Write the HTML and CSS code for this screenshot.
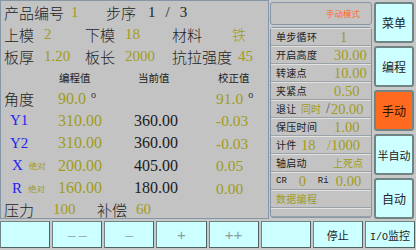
FILE: index.html
```html
<!DOCTYPE html>
<html lang="zh-CN">
<head>
  <meta charset="UTF-8" />
  <title>折弯机 手动</title>
  <link rel="stylesheet" href="styles.css">
</head>
<body>
  <div class="screen">
    <div class="upper">

      <section class="main">
        <div class="info r1">
          <span class="lbl">产品编号</span>
          <span class="val">1</span>
          <span class="lbl">步序</span>
          <span class="step"><span>1</span><span>/</span><span>3</span></span>
        </div>
        <div class="info r2">
          <span class="lbl">上模</span><span class="val">2</span>
          <span class="lbl">下模</span><span class="val">18</span>
          <span class="lbl">材料</span><span class="val cjk">铁</span>
        </div>
        <div class="info r2">
          <span class="lbl">板厚</span><span class="val">1.20</span>
          <span class="lbl">板长</span><span class="val">2000</span>
          <span class="lbl">抗拉强度</span><span class="val shift">45</span>
        </div>

        <div class="heads">
          <span></span><span class="h1">编程值</span><span class="h2">当前值</span><span class="h3">校正值</span>
        </div>

        <div class="axis">
          <span class="lbl">角度</span>
          <span class="num olive">90.0<sup>o</sup></span>
          <span></span>
          <span class="num olive fix">91.0<sup>o</sup></span>
        </div>
        <div class="axis">
          <span class="name">Y1</span>
          <span class="num olive">310.00</span>
          <span class="num">360.00</span>
          <span class="num olive fix">-0.03</span>
        </div>
        <div class="axis">
          <span class="name">Y2</span>
          <span class="num olive">310.00</span>
          <span class="num">360.00</span>
          <span class="num olive fix">-0.03</span>
        </div>
        <div class="axis">
          <span class="name single">X<small>绝对</small></span>
          <span class="num olive">200.00</span>
          <span class="num">405.00</span>
          <span class="num olive fix">0.05</span>
        </div>
        <div class="axis">
          <span class="name single">R<small>绝对</small></span>
          <span class="num olive">160.00</span>
          <span class="num">180.00</span>
          <span class="num olive fix">0.00</span>
        </div>
        <div class="press">
          <span class="lbl">压力</span><span class="val">100</span>
          <span class="lbl">补偿</span><span class="val">60</span>
        </div>
      </section>

      <section class="side">
        <div class="mode">手动模式</div>
        <ul class="params">
          <li><span class="plbl">单步循环</span><span class="pval one">1</span></li>
          <li><span class="plbl">开启高度</span><span class="pval">30.00</span></li>
          <li><span class="plbl">转速点</span><span class="pval">10.00</span></li>
          <li><span class="plbl">夹紧点</span><span class="pval">0.50</span></li>
          <li><span class="plbl">退让</span><span class="tiny">同时</span><span class="slash">/</span><span class="pval">20.00</span></li>
          <li><span class="plbl">保压时间</span><span class="pval">1.00</span></li>
          <li><span class="plbl">计件</span><span class="pval count">18</span><span class="pval">/1000</span></li>
          <li><span class="plbl">轴启动</span><span class="tiny dead">上死点</span></li>
          <li><span class="code">CR</span><span class="pval zero">0</span><span class="code ri">Ri</span><span class="pval">0.00</span></li>
          <li><span class="plbl prog">数据编程</span></li>
          <li class="blank"></li>
        </ul>
      </section>

      <nav class="menu">
        <button class="key">菜单</button>
        <button class="key">编程</button>
        <button class="key active">手动</button>
        <button class="key small">半自动</button>
        <button class="key">自动</button>
      </nav>
    </div>

    <div class="bar">
      <button class="fkey"></button>
      <button class="fkey dim">— —</button>
      <button class="fkey dim">—</button>
      <button class="fkey dim plus">+</button>
      <button class="fkey dim plus">++</button>
      <button class="fkey"></button>
      <button class="fkey">停止</button>
      <button class="fkey"><span class="io">I/O</span>监控</button>
    </div>
  </div>
</body>
</html>
```

FILE: styles.css
```css
body {
  margin: 0;
  background: #c8c8c8;
  font-family: "Liberation Serif", "Noto Sans CJK SC", serif;
  color: #1c1c1c;
}

.screen {
  width: 416px;
  height: 250px;
  overflow: hidden;
}

.upper {
  display: flex;
  height: 220px;
}

/* left work area */
.main {
  width: 269px;
  height: 219px;
  box-sizing: border-box;
  border: 1px solid #8596a6;
  background: #c3c3c3;
}

.lbl {
  font-family: "Noto Sans CJK SC", sans-serif;
  font-size: 15px;
  font-weight: 300;
  color: #222;
}

.val {
  font-size: 15px;
  color: #a09c1c;
}
.val.cjk {
  font-family: "Noto Sans CJK SC", sans-serif;
  font-size: 14px;
  font-weight: 300;
}
.val.shift {
  margin-left: 6px;
}

.olive {
  color: #a09c1c;
}

.info {
  display: grid;
  align-items: center;
  height: 22px;
  padding-left: 3px;
  line-height: 1;
}
.info.r1 {
  grid-template-columns: 67px 35px 42px 1fr;
}
.info.r2 {
  grid-template-columns: 40px 41px 40px 47px 60px 1fr;
}

.step {
  display: flex;
  font-size: 15px;
  color: #222;
}
.step span + span {
  margin-left: 10px;
}

.heads {
  display: grid;
  grid-template-columns: 57px 76px 82px 1fr;
  align-items: center;
  height: 20px;
  font-family: "Noto Sans CJK SC", sans-serif;
  font-size: 10.5px;
  color: #222;
}
.heads .h1 { padding-left: 1px; }
.heads .h2 { padding-left: 4px; }
.heads .h3 { padding-left: 2px; }

.axis {
  display: grid;
  grid-template-columns: 57px 76px 82px 1fr;
  align-items: center;
  height: 22.5px;
  line-height: 1;
}
.axis .lbl {
  padding-left: 3px;
}

.name {
  padding-left: 9px;
  font-size: 15px;
  color: #2424f0;
}
.name.single {
  padding-left: 11px;
}
.name small {
  margin-left: 6px;
  font-family: "Noto Sans CJK SC", sans-serif;
  font-size: 8.5px;
  color: #a09c1c;
  vertical-align: 1px;
}

.num {
  font-size: 16px;
}
.num.fix {
  font-size: 15.5px;
}

.num sup {
  margin-left: 5px;
  font-size: 10px;
  vertical-align: 6px;
  color: #333;
}

.press {
  display: grid;
  grid-template-columns: 49px 44px 39px 1fr;
  align-items: center;
  height: 19px;
  padding-left: 3px;
  line-height: 1;
}

/* parameter column */
.side {
  width: 102px;
  margin-left: 1px;
}

.mode {
  height: 23px;
  margin-top: 2px;
  box-sizing: border-box;
  border: 1px solid #8596a6;
  border-radius: 3px;
  background: #c3c3c3;
  font-family: "Noto Sans CJK SC", sans-serif;
  font-size: 8.5px;
  color: #ff6a22;
  text-align: right;
  padding-right: 11px;
  line-height: 21px;
}

.params {
  list-style: none;
  margin: 2px 0 0;
  padding: 0;
  height: 191px;
  box-sizing: border-box;
  border: 1px solid #8596a6;
  border-radius: 3px;
  background: #c3c3c3;
  display: flex;
  flex-direction: column;
}

.params li {
  display: flex;
  align-items: center;
  height: 18px;
  flex: none;
  box-sizing: border-box;
  padding-left: 5px;
  border-top: 1px solid #e2e2e2;
  border-bottom: 1px solid #9aa2a8;
  line-height: 1;
}
.params li.blank {
  flex: 1;
}

.plbl {
  width: 58px;
  font-family: "Noto Sans CJK SC", sans-serif;
  font-size: 10px;
  letter-spacing: 0.3px;
  color: #222;
  flex: none;
}
.plbl.prog {
  color: #a09c1c;
}

.pval {
  font-size: 14.5px;
  color: #a09c1c;
}
.pval.one {
  margin-left: 6px;
}
.pval.count {
  margin-left: -33px;
  width: 26px;
}
.pval.zero {
  margin-left: 12px;
  width: 19px;
}

.tiny {
  margin-left: -33px;
  font-family: "Noto Sans CJK SC", sans-serif;
  font-size: 10px;
  color: #a09c1c;
}
.tiny.dead {
  margin-left: -1px;
}

.slash {
  margin: 0 1px 0 5px;
  font-size: 14px;
  color: #555;
}

.code {
  font-family: "Liberation Mono", monospace;
  font-size: 9px;
  color: #222;
}
.code.ri {
  width: 18px;
}

/* mode buttons */
.menu {
  display: flex;
  flex-direction: column;
  gap: 3px;
  width: 40px;
  margin-left: 2px;
  padding-top: 2px;
}

.key {
  height: 41px;
  padding: 0;
  border: 2px solid #6f8484;
  border-radius: 3px;
  background: #ccffff;
  font-family: "Noto Sans CJK SC", sans-serif;
  font-size: 12px;
  color: #222;
}
.key.small {
  font-size: 11px;
}
.key.active {
  background: #ff6a1e;
  color: #2a1200;
}

/* function keys */
.bar {
  display: grid;
  grid-template-columns: repeat(8, 1fr);
  gap: 2px;
  height: 30px;
  box-sizing: border-box;
  padding: 1px 1px 2px 0;
}

.fkey {
  padding: 0;
  border: 1px solid #6f8484;
  border-bottom-color: #4f6262;
  border-right-color: #4f6262;
  background: #ccffff;
  font-family: "Noto Sans CJK SC", sans-serif;
  font-size: 11px;
  color: #222;
}
.fkey.dim {
  font-size: 10px;
  color: #8a9c9c;
}
.fkey.plus {
  font-family: "Liberation Sans", sans-serif;
  font-size: 15px;
  font-weight: 300;
}

.io {
  font-family: "Liberation Mono", monospace;
  font-size: 10px;
}
```
